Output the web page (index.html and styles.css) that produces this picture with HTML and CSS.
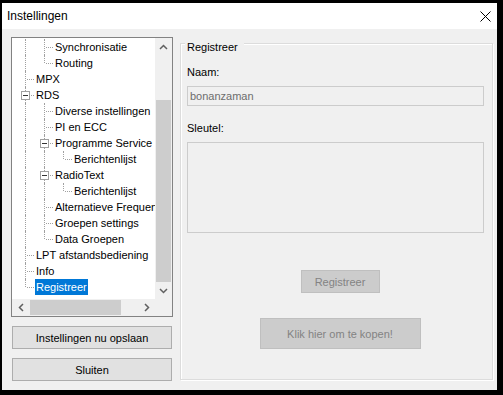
FILE: index.html
```html
<!DOCTYPE html>
<html lang="nl">
<head>
  <meta charset="UTF-8" />
  <title>Instellingen</title>
  <link rel="stylesheet" href="styles.css">
</head>
<body>
  <div class="window">
    <div class="titlebar">
      <span class="title">Instellingen</span>
      <svg class="close" width="11" height="11" viewBox="0 0 11 11">
        <path d="M0.5 0.5 L10.5 10.5 M10.5 0.5 L0.5 10.5" stroke="#000" stroke-width="1" fill="none" />
      </svg>
    </div>

    <div class="content">
      <div class="left">
        <div class="tree">
          <div class="rows">
            <div class="row"><span class="g v"></span><span class="g t"></span><span class="label">Synchronisatie</span></div>
            <div class="row"><span class="g v"></span><span class="g l"></span><span class="label">Routing</span></div>
            <div class="row"><span class="g t"></span><span class="label">MPX</span></div>
            <div class="row"><span class="g t"><span class="box"></span></span><span class="label">RDS</span></div>
            <div class="row"><span class="g v"></span><span class="g t"></span><span class="label">Diverse instellingen</span></div>
            <div class="row"><span class="g v"></span><span class="g t"></span><span class="label">PI en ECC</span></div>
            <div class="row"><span class="g v"></span><span class="g t"><span class="box"></span></span><span class="label">Programme Service</span></div>
            <div class="row"><span class="g v"></span><span class="g v"></span><span class="g l"></span><span class="label">Berichtenlijst</span></div>
            <div class="row"><span class="g v"></span><span class="g t"><span class="box"></span></span><span class="label">RadioText</span></div>
            <div class="row"><span class="g v"></span><span class="g v"></span><span class="g l"></span><span class="label">Berichtenlijst</span></div>
            <div class="row"><span class="g v"></span><span class="g t"></span><span class="label">Alternatieve Frequenties</span></div>
            <div class="row"><span class="g v"></span><span class="g t"></span><span class="label">Groepen settings</span></div>
            <div class="row"><span class="g v"></span><span class="g l"></span><span class="label">Data Groepen</span></div>
            <div class="row"><span class="g t"></span><span class="label">LPT afstandsbediening</span></div>
            <div class="row"><span class="g t"></span><span class="label">Info</span></div>
            <div class="row"><span class="g l"></span><span class="label sel">Registreer</span></div>
          </div>

          <div class="vscroll">
            <div class="arrow">
              <svg width="9" height="6" viewBox="0 0 9 6"><polyline points="1,5 4.5,1.5 8,5" /></svg>
            </div>
            <div class="track"></div>
            <div class="thumb"></div>
            <div class="arrow">
              <svg width="9" height="6" viewBox="0 0 9 6"><polyline points="1,1 4.5,4.5 8,1" /></svg>
            </div>
          </div>

          <div class="hscroll">
            <div class="arrow">
              <svg width="6" height="9" viewBox="0 0 6 9"><polyline points="5,1 1.5,4.5 5,8" /></svg>
            </div>
            <div class="thumb"></div>
            <div class="track"></div>
            <div class="arrow">
              <svg width="6" height="9" viewBox="0 0 6 9"><polyline points="1,1 4.5,4.5 1,8" /></svg>
            </div>
          </div>

          <div class="corner"></div>
        </div>

        <button class="btn">Instellingen nu opslaan</button>
        <button class="btn">Sluiten</button>
      </div>

      <div class="group">
        <div class="group-title">Registreer</div>
        <div class="field-label first">Naam:</div>
        <div class="input">bonanzaman</div>
        <div class="field-label">Sleutel:</div>
        <div class="textarea"></div>
        <div class="actions">
          <button class="btn-off reg">Registreer</button>
          <button class="btn-off buy">Klik hier om te kopen!</button>
        </div>
      </div>
    </div>
  </div>
</body>
</html>
```

FILE: styles.css
```css
body {
  margin: 0;
  height: 395px;
  box-sizing: border-box;
  padding: 3px 6px 5px 2px;
  background: #000;
  font-family: 'Liberation Sans', Arial, sans-serif;
  font-size: 11px;
  color: #000;
  display: flex;
}
.window {
  flex: 1;
  display: flex;
  flex-direction: column;
}
.titlebar {
  height: 26px;
  background: #fff;
  display: flex;
  align-items: center;
  justify-content: space-between;
  padding: 0 6px 0 5px;
}
.title {
  font-size: 12px;
}
.close {
  margin-top: 1px;
}
.content {
  flex: 1;
  background: #f0f0f0;
  display: flex;
  gap: 7px;
  padding: 8px 4px 9px 9px;
}
.left {
  width: 162px;
  display: flex;
  flex-direction: column;
}

/* tree view */
.tree {
  height: 280px;
  box-sizing: border-box;
  border: 1px solid #828282;
  background: #fff;
  display: grid;
  grid-template-columns: 1fr 17px;
  grid-template-rows: 1fr 17px;
}
.rows {
  overflow: hidden;
  white-space: nowrap;
  padding: 1px 0 0 4px;
}
.row {
  display: flex;
  height: 16px;
  line-height: 16px;
}
.g {
  position: relative;
  width: 19px;
  flex: none;
}
.g.v::before, .g.t::before, .g.l::before {
  content: '';
  position: absolute;
  left: 9px;
  top: 0;
  bottom: 0;
  border-left: 1px dotted #a0a0a0;
}
.g.l::before {
  bottom: 8px;
}
.g.t::after, .g.l::after {
  content: '';
  position: absolute;
  left: 11px;
  right: 1px;
  top: 8px;
  border-top: 1px dotted #a0a0a0;
}
.box {
  position: absolute;
  left: 5px;
  top: 4px;
  width: 9px;
  height: 9px;
  box-sizing: border-box;
  border: 1px solid #a0a0a0;
  background: #fff;
  z-index: 1;
}
.box::after {
  content: '';
  position: absolute;
  left: 1px;
  top: 3px;
  width: 5px;
  border-top: 1px solid #333;
}
.label {
  padding: 0 1px;
}
.label.sel {
  background: #0078d7;
  color: #fff;
}

/* scrollbars */
.vscroll, .hscroll {
  background: #f0f0f0;
  display: flex;
}
.vscroll {
  flex-direction: column;
}
.arrow {
  width: 17px;
  height: 17px;
  flex: none;
  display: flex;
  align-items: center;
  justify-content: center;
}
.arrow polyline {
  fill: none;
  stroke: #606060;
  stroke-width: 1.5;
}
.vscroll .track {
  height: 45px;
}
.vscroll .thumb {
  flex: 1;
  margin: 0 1px;
  background: #cdcdcd;
}
.hscroll .thumb {
  width: 91px;
  margin: 1px 0 1px 1px;
  background: #cdcdcd;
}
.hscroll .track {
  flex: 1;
}
.corner {
  background: #f0f0f0;
}

/* buttons */
.btn {
  margin: 9px 1px 0;
  height: 23px;
  font-family: inherit;
  font-size: 11px;
  color: #000;
  background: #e1e1e1;
  border: 1px solid #adadad;
  padding: 0;
}

/* group box */
.group {
  width: 313px;
  height: 337px;
  margin-top: 6px;
  box-sizing: border-box;
  border: 1px solid #dcdcdc;
  box-shadow: inset 1px 1px 0 #fff, 1px 1px 0 #fff;
  padding: 0 8px 0 6px;
  display: flex;
  flex-direction: column;
  align-items: stretch;
}
.group-title {
  align-self: flex-start;
  margin: -4px 0 0 -2px;
  padding: 0 6px 0 2px;
  line-height: 15px;
  background: #f0f0f0;
}
.field-label {
  line-height: 15px;
  margin-top: 15px;
}
.field-label.first {
  margin-top: 10px;
}
.input {
  margin-top: 6px;
  height: 20px;
  box-sizing: border-box;
  border: 1px solid #cccccc;
  background: #f0f0f0;
  color: #6d6d6d;
  line-height: 18px;
  padding-left: 2px;
}
.textarea {
  margin-top: 6px;
  height: 91px;
  box-sizing: border-box;
  border: 1px solid #cccccc;
  background: #f0f0f0;
}
.actions {
  display: flex;
  flex-direction: column;
  align-items: center;
  padding-left: 9px;
}
.btn-off {
  font-family: inherit;
  font-size: 11px;
  color: #838383;
  background: #cccccc;
  border: 1px solid #bfbfbf;
  padding: 0;
}
.btn-off.reg {
  margin-top: 37px;
  width: 79px;
  height: 23px;
}
.btn-off.buy {
  margin-top: 25px;
  width: 161px;
  height: 31px;
}
```
